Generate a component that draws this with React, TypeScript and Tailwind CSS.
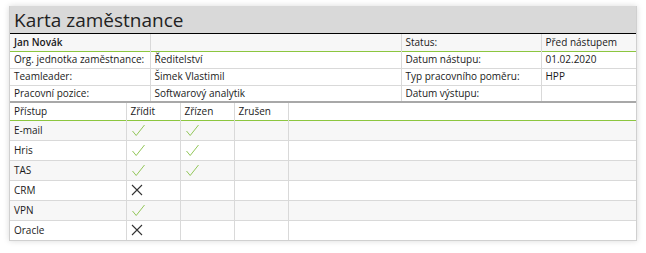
import React from "react";

const Check = () => (
  <svg width="15" height="15" viewBox="0 0 15 15" className="block">
    <path d="M1.5 8 L5.2 12.5 L13.5 2" fill="none" stroke="#93c75a" strokeWidth="1" />
  </svg>
);

const Cross = () => (
  <svg width="12" height="12" viewBox="0 0 12 12" className="block">
    <path d="M1 1 L11 11 M11 1 L1 11" fill="none" stroke="#333" strokeWidth="1.1" />
  </svg>
);

type Mark = "check" | "cross" | null;

const access: { name: string; zridit: Mark; zrizen: Mark; zrusen: Mark }[] = [
  { name: "E-mail", zridit: "check", zrizen: "check", zrusen: null },
  { name: "Hris", zridit: "check", zrizen: "check", zrusen: null },
  { name: "TAS", zridit: "check", zrizen: "check", zrusen: null },
  { name: "CRM", zridit: "cross", zrizen: null, zrusen: null },
  { name: "VPN", zridit: "check", zrizen: null, zrusen: null },
  { name: "Oracle", zridit: "cross", zrizen: null, zrusen: null },
];

const MarkCell = ({ m }: { m: Mark }) => (
  <td className="border-r border-[#d9d9d9] pl-[4px] align-middle">
    {m === "check" ? <Check /> : m === "cross" ? <Cross /> : null}
  </td>
);

export default function App() {
  const info = [
    ["Org. jednotka zaměstnance:", "Ředitelství", "Datum nástupu:", "01.02.2020"],
    ["Teamleader:", "Šimek Vlastimil", "Typ pracovního poměru:", "HPP"],
    ["Pracovní pozice:", "Softwarový analytik", "Datum výstupu:", ""],
  ];
  return (
    <div
      className="w-[646px] h-[253px] bg-white pt-[6px] pl-[9px] text-[#1a1a1a]"
      style={{ fontFamily: '"Open Sans", "Noto Sans", sans-serif' }}
    >
      <div className="w-[628px] border border-[#d0d0d0] border-t-0 shadow-[0_0_6px_rgba(0,0,0,0.15)] bg-white">
        <div className="h-[28px] bg-[#d9d9d9] border-b border-black pl-[4px] text-[19px] leading-[28px] text-[#222]">
          Karta zaměstnance
        </div>
        <table className="w-full border-collapse text-[10px] table-fixed">
          <colgroup>
            <col className="w-[140px]" />
            <col className="w-[251px]" />
            <col className="w-[140px]" />
            <col />
          </colgroup>
          <tbody>
            <tr className="h-[17px] bg-[#f7f7f7] border-b border-[#8cc63f]">
              <td className="border-r border-[#d9d9d9] pl-[4px] font-semibold">Jan Novák</td>
              <td className="border-r border-[#d9d9d9]"></td>
              <td className="border-r border-[#d9d9d9] pl-[4px]">Status:</td>
              <td className="pl-[4px]">Před nástupem</td>
            </tr>
            {info.map((r, i) => (
              <tr
                key={i}
                className={
                  i === 2
                    ? "h-[17px] border-b-2 border-[#a8a8a8]"
                    : "h-[17px] border-b border-[#d9d9d9]"
                }
              >
                <td className="border-r border-[#d9d9d9] pl-[4px]">{r[0]}</td>
                <td className="border-r border-[#d9d9d9] pl-[4px]">{r[1]}</td>
                <td className="border-r border-[#d9d9d9] pl-[4px]">{r[2]}</td>
                <td className="pl-[4px]">{r[3]}</td>
              </tr>
            ))}
          </tbody>
        </table>
        <table className="w-full border-collapse text-[10px] table-fixed">
          <colgroup>
            <col className="w-[116px]" />
            <col className="w-[54px]" />
            <col className="w-[54px]" />
            <col className="w-[54px]" />
            <col />
          </colgroup>
          <tbody>
            <tr className="h-[17px] border-b border-[#8cc63f]">
              <td className="border-r border-[#d9d9d9] pl-[4px]">Přístup</td>
              <td className="border-r border-[#d9d9d9] pl-[4px]">Zřídit</td>
              <td className="border-r border-[#d9d9d9] pl-[4px]">Zřízen</td>
              <td className="border-r border-[#d9d9d9] pl-[4px]">Zrušen</td>
              <td></td>
            </tr>
            {access.map((a, i) => (
              <tr
                key={a.name}
                className={
                  (i % 2 === 0 ? "bg-[#f7f7f7] " : "bg-white ") +
                  (i === access.length - 1 ? "h-[20px]" : "h-[20px] border-b border-[#d9d9d9]")
                }
              >
                <td className="border-r border-[#d9d9d9] pl-[4px] font-medium">{a.name}</td>
                <MarkCell m={a.zridit} />
                <MarkCell m={a.zrizen} />
                <MarkCell m={a.zrusen} />
                <td></td>
              </tr>
            ))}
          </tbody>
        </table>
      </div>
    </div>
  );
}
